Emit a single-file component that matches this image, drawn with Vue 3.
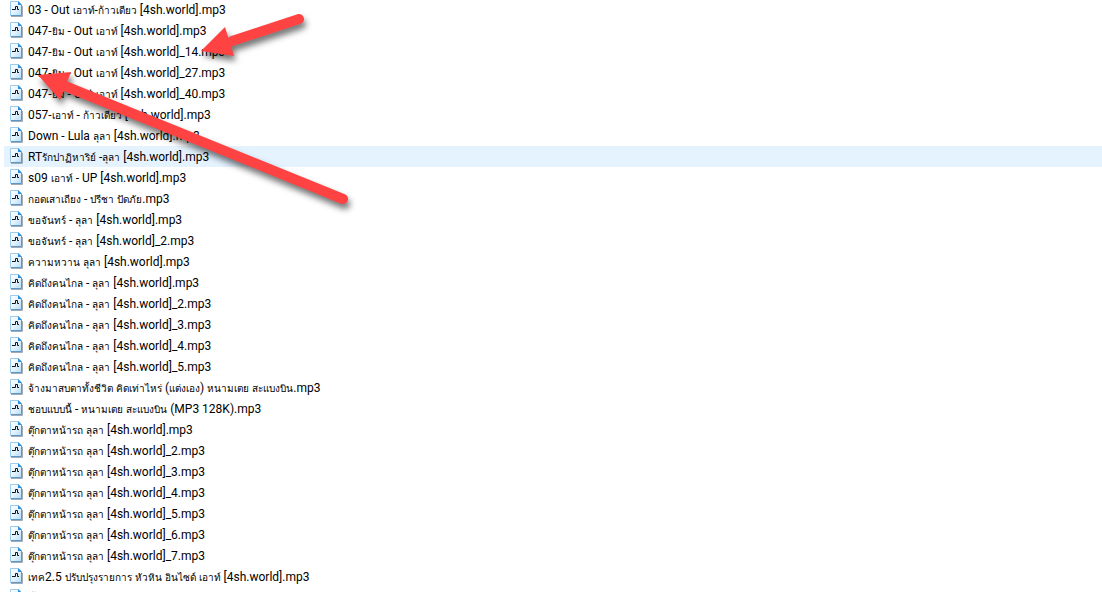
<script setup>
const names = [
  '03 - Out เอาท์-ก้าวเดียว [4sh.world].mp3',
  '047-ยิม - Out เอาท์ [4sh.world].mp3',
  '047-ยิม - Out เอาท์ [4sh.world]_14.mp3',
  '047-ยิม - Out เอาท์ [4sh.world]_27.mp3',
  '047-ยิม - Out เอาท์ [4sh.world]_40.mp3',
  '057-เอาท์ - ก้าวเดียว [4sh.world].mp3',
  'Down - Lula ลุลา [4sh.world].mp3',
  'RTรักปาฏิหาริย์ -ลุลา [4sh.world].mp3',
  's09 เอาท์ - UP [4sh.world].mp3',
  'กอดเสาเถียง - ปรีชา ปัดภัย.mp3',
  'ขอจันทร์ - ลุลา [4sh.world].mp3',
  'ขอจันทร์ - ลุลา [4sh.world]_2.mp3',
  'ความหวาน ลุลา [4sh.world].mp3',
  'คิดถึงคนไกล - ลุลา [4sh.world].mp3',
  'คิดถึงคนไกล - ลุลา [4sh.world]_2.mp3',
  'คิดถึงคนไกล - ลุลา [4sh.world]_3.mp3',
  'คิดถึงคนไกล - ลุลา [4sh.world]_4.mp3',
  'คิดถึงคนไกล - ลุลา [4sh.world]_5.mp3',
  'จ้างมาสบตาทั้งชีวิต คิดเท่าไหร่ (แต่งเอง) หนามเตย สะแบงบิน.mp3',
  'ชอบแบบนี้ - หนามเตย สะแบงบิน (MP3 128K).mp3',
  'ตุ๊กตาหน้ารถ ลุลา [4sh.world].mp3',
  'ตุ๊กตาหน้ารถ ลุลา [4sh.world]_2.mp3',
  'ตุ๊กตาหน้ารถ ลุลา [4sh.world]_3.mp3',
  'ตุ๊กตาหน้ารถ ลุลา [4sh.world]_4.mp3',
  'ตุ๊กตาหน้ารถ ลุลา [4sh.world]_5.mp3',
  'ตุ๊กตาหน้ารถ ลุลา [4sh.world]_6.mp3',
  'ตุ๊กตาหน้ารถ ลุลา [4sh.world]_7.mp3',
  'เทค2.5 ปรับปรุงรายการ หัวหิน อินไซด์ เอาท์ [4sh.world].mp3',
  'ทั้ง'
]
const selected = 7

// Thai runs are set in their own size beside the Latin text.
const files = names.map((name) =>
  name.split(/([\u0E00-\u0E7F]+)/).filter(Boolean).map((text) => ({
    text,
    thai: /[\u0E00-\u0E7F]/.test(text)
  }))
)
</script>

<template>
  <main class="pane">
    <svg class="defs" aria-hidden="true">
      <defs>
        <linearGradient id="page" x1="0" y1="0" x2="1" y2="1">
          <stop offset="0" stop-color="#ffffff" />
          <stop offset="0.5" stop-color="#e6f4fe" />
          <stop offset="1" stop-color="#b4dcf8" />
        </linearGradient>
        <symbol id="audio-file" viewBox="0 0 16 16">
          <path d="M3 15.500H14.500V5" fill="none" stroke="#a3acb5" />
          <path d="M2.500 .5H10.500L13.500 3.500V14.500H2.500Z" fill="url(#page)" stroke="#9ccbee" />
          <path d="M13.500 4V14.500H3" fill="none" stroke="#5d97c8" />
          <path d="M10 0L14 4H10Z" fill="#2f8fdb" />
          <path d="M4 8.500H7.500V5.500H9.500V8.500H11" fill="none" stroke="#10141c" />
        </symbol>
      </defs>
    </svg>

    <ul class="list">
      <li v-for="(parts, i) in files" :key="i" class="row" :class="{ selected: i === selected }">
        <svg class="icon" aria-hidden="true"><use href="#audio-file" /></svg>
        <span class="name"><span v-for="(part, j) in parts" :key="j" :class="{ thai: part.thai }">{{ part.text }}</span></span>
      </li>
    </ul>

    <svg class="marks" width="360" height="220" viewBox="0 0 360 220" aria-hidden="true">
      <g class="arrow">
        <path d="M232 41L299 19" />
        <polygon points="201,51 225,27 234,56" />
      </g>
      <g class="arrow">
        <path d="M65 86L343 199" />
        <polygon points="38,75 71,72 60,100" />
      </g>
    </svg>
  </main>
</template>

<style>
body {
  margin: 0;
  background: #fff;
  overflow: hidden;
}
</style>

<style scoped>
.pane {
  position: relative;
  height: 100vh;
  overflow: hidden;
  background: #fff;
  color: #000;
  font: 12px/23px Roboto, "Noto Sans", sans-serif;
}
.defs {
  position: absolute;
  width: 0;
  height: 0;
}
.list {
  list-style: none;
  margin: -1px 0 0 4px;
  padding: 0;
}
.row {
  display: flex;
  align-items: flex-start;
  gap: 4px;
  height: 21px;
  padding-left: 4px;
}
.selected {
  background: #e5f3ff;
}
.icon {
  flex: none;
  width: 16px;
  height: 16px;
  margin-top: 2px;
}
.name {
  white-space: pre;
}
.thai {
  font-family: "Noto Sans", sans-serif;
  font-size: 10px;
}
.marks {
  position: absolute;
  left: 0;
  top: 0;
  pointer-events: none;
}
.arrow {
  filter: drop-shadow(2px 5px 3px rgba(0, 0, 0, 0.55));
}
.arrow path {
  fill: none;
  stroke: #ff4343;
  stroke-width: 10;
  stroke-linecap: round;
}
.arrow polygon {
  fill: #ff4343;
}
</style>
